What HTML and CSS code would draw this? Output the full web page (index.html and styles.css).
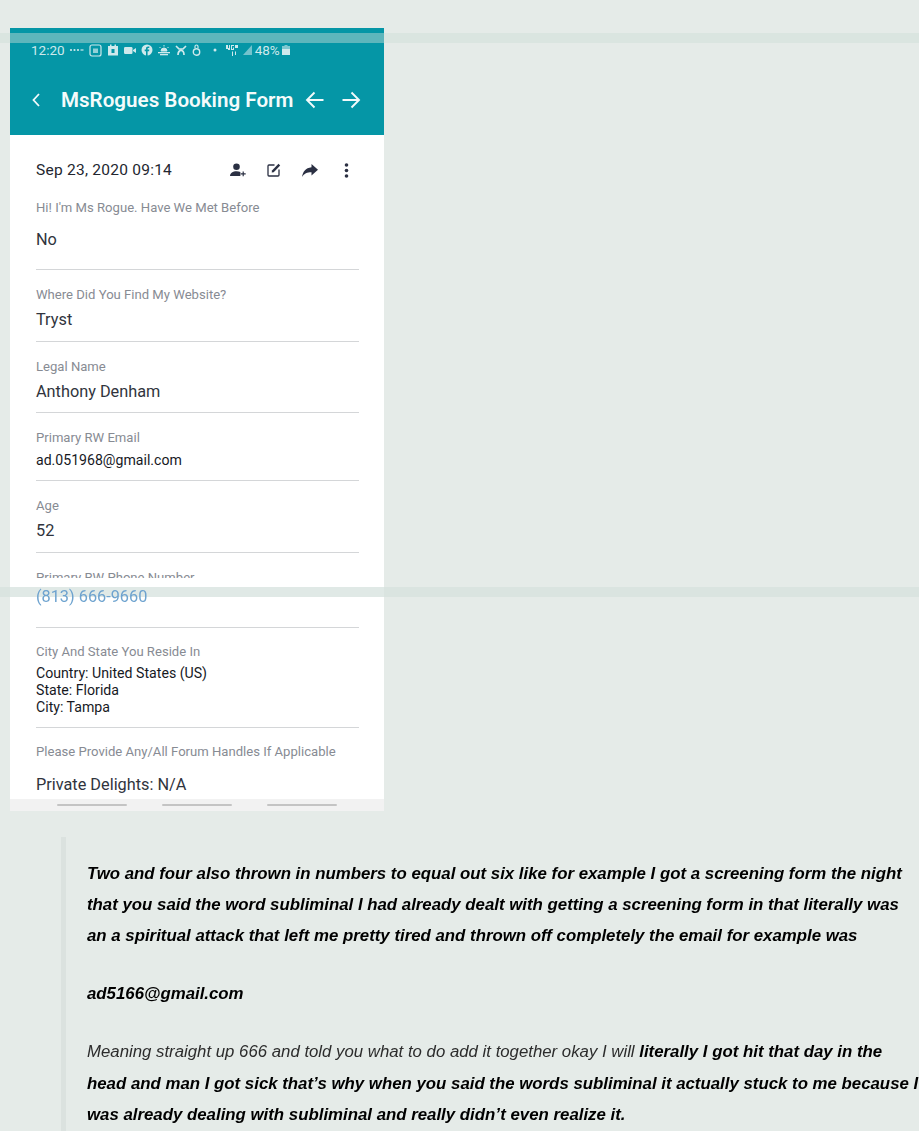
FILE: index.html
```html
<!DOCTYPE html>
<html lang="en">
<head>
    <meta charset="UTF-8">
    <meta name="viewport" content="width=device-width, initial-scale=1.0">
    <title>MsRogues Booking Form</title>
    <link rel="stylesheet" href="styles.css">
</head>
<body>
    <div class="band band-top"></div>

    <div class="phone">
        <div class="band band-mid"></div>
        <div class="app-header">
            <div class="status-bar">
                <span class="clock">12:20</span>
                <svg class="st st-dots" width="15" height="10" viewBox="0 0 15 10"><circle cx="2" cy="5" r="1.100"/><circle cx="5.500" cy="5" r="1.100"/><circle cx="9" cy="5" r="1.100"/><path d="M11.500 4h3v2h-3z" opacity=".6"/></svg>
                <svg class="st" width="13" height="13" viewBox="0 0 13 13"><rect x="1" y="1" width="11" height="11" rx="2" fill="none" stroke="#cfe9ec" stroke-width="1.200"/><rect x="4" y="4.500" width="5" height="4.500" fill="#cfe9ec" opacity=".7"/></svg>
                <svg class="st" width="12" height="12" viewBox="0 0 12 12"><path d="M1 2h2V0.500h1.500V2h3V0.500H9V2h2v9.500H1z"/><rect x="4.500" y="5" width="3" height="4" fill="#0596a6"/></svg>
                <svg class="st" width="12" height="9" viewBox="0 0 12 9"><rect x="0" y="1" width="8.500" height="7" rx="1.200"/><path d="M9 4l3-2v5L9 5z"/></svg>
                <svg class="st" width="12" height="12" viewBox="0 0 12 12"><circle cx="6" cy="6" r="5.500"/><path d="M6.600 12V7.200h1.500l.2-1.600H6.600V4.700c0-.5.2-.8.8-.8h.9V2.500H7.100C5.700 2.500 5 3.300 5 4.500v1.100H3.700v1.600H5V12z" fill="#0596a6"/></svg>
                <svg class="st" width="12" height="11" viewBox="0 0 12 11"><path d="M3 6a3 3 0 0 1 6 0zM6 0v1.500M1.500 2l1 1M10.500 2l-1 1" stroke="#cfe9ec" stroke-width="1"/><rect x="0" y="7" width="12" height="1.300"/><rect x="2" y="9" width="8" height="1.300"/></svg>
                <svg class="st" width="12" height="11" viewBox="0 0 12 11"><path d="M1 1l3 3h4l3-3M3 10c0-3 1.500-4.500 3-4.500S9 7 9 10" fill="none" stroke="#cfe9ec" stroke-width="1.700"/></svg>
                <svg class="st" width="9" height="12" viewBox="0 0 9 12"><circle cx="4.500" cy="8" r="3.200" fill="none" stroke="#cfe9ec" stroke-width="1.400"/><path d="M3 4V2.500a1.500 1.500 0 0 1 3 0V4" fill="none" stroke="#cfe9ec" stroke-width="1.200"/></svg>
                <svg class="st st-dot" width="4" height="4" viewBox="0 0 4 4"><circle cx="2" cy="2" r="1.500"/></svg>
                <svg class="st" width="15" height="11" viewBox="0 0 15 11"><path d="M0 0h2v3h1V0h1v5H2V4H0zM5 0h3v1H6v3h1V2.500h1V5H5zM9 0h3v3H9zM6 6.500h1V11H6zM9 6.500h1V10H9z"/></svg>
                <svg class="st st-signal" width="9" height="10" viewBox="0 0 9 10"><path d="M9 0v10H0z" opacity=".55"/></svg>
                <span class="battery-text">48%</span>
                <svg class="st st-battery" width="8" height="10" viewBox="0 0 8 10"><path d="M2.500 0h3v1H8v9H0V1h2.500z" opacity=".6"/><rect x="0" y="4" width="8" height="6"/></svg>
            </div>
            <div class="title-bar">
                <svg class="back" width="10" height="16" viewBox="0 0 10 16"><path d="M8 2L2.500 8 8 14" fill="none" stroke="#f2fafb" stroke-width="1.800"/></svg>
                <h1 class="title">MsRogues Booking Form</h1>
                <svg class="arrow-icon" width="20" height="18" viewBox="0 0 20 18"><path d="M18.500 9H2M9.500 1.500L2 9l7.500 7.500" fill="none" stroke="#f2fafb" stroke-width="1.900"/></svg>
                <svg class="arrow-icon arrow-next" width="20" height="18" viewBox="0 0 20 18"><path d="M1.500 9H18M10.500 1.500L18 9l-7.500 7.500" fill="none" stroke="#f2fafb" stroke-width="1.900"/></svg>
            </div>
        </div>

        <div class="form">
            <div class="form-top">
                <span class="form-date">Sep 23, 2020 09:14</span>
                <div class="form-actions">
                    <svg width="16" height="14" viewBox="0 0 16 14"><circle cx="6.500" cy="3.800" r="3.300"/><path d="M0 13c0-3 3-4.800 6.500-4.800 1.500 0 2.800.3 3.900.9V13z"/><path d="M12.600 8.500h1.200v1.800h1.900v1.200h-1.900v1.800h-1.200v-1.800h-1.900v-1.200h1.900z"/></svg>
                    <svg width="14" height="14" viewBox="0 0 14 14"><path d="M7.500 2H2a1 1 0 0 0-1 1v9a1 1 0 0 0 1 1h9a1 1 0 0 0 1-1V6.500" fill="none" stroke="#2b3043" stroke-width="1.300"/><path d="M5 7.500L11.500.8l1.700 1.700L6.700 9.200 4.700 9.500z"/></svg>
                    <svg width="16" height="13" viewBox="0 0 16 13"><path d="M9.500 0L16 5.800 9.500 11.500V8.200C5 8.200 2.300 9.500 0 13 .8 8 3.500 4 9.500 3.300z"/></svg>
                    <svg class="action-more" width="5" height="15" viewBox="0 0 5 15"><circle cx="2.500" cy="2" r="1.800"/><circle cx="2.500" cy="7.500" r="1.800"/><circle cx="2.500" cy="13" r="1.800"/></svg>
                </div>
            </div>

            <div class="field field-first">
                <div class="label">Hi! I'm Ms Rogue. Have We Met Before</div>
                <div class="value value-first">No</div>
            </div>
            <div class="field">
                <div class="label">Where Did You Find My Website?</div>
                <div class="value">Tryst</div>
            </div>
            <div class="field">
                <div class="label">Legal Name</div>
                <div class="value">Anthony Denham</div>
            </div>
            <div class="field field-email">
                <div class="label">Primary RW Email</div>
                <div class="value value-small">ad.051968@gmail.com</div>
            </div>
            <div class="field">
                <div class="label">Age</div>
                <div class="value">52</div>
            </div>
            <div class="field field-phone">
                <div class="label label-cut">Primary RW Phone Number</div>
                <div class="value value-link">(813) 666-9660</div>
            </div>
            <div class="field field-city">
                <div class="label">City And State You Reside In</div>
                <div class="value-lines">Country: United States (US)<br>State: Florida<br>City: Tampa</div>
            </div>
            <div class="field field-last">
                <div class="label">Please Provide Any/All Forum Handles If Applicable</div>
                <div class="value value-private">Private Delights: N/A</div>
            </div>
        </div>

        <div class="nav-bar">
            <span class="pill"></span>
            <span class="pill"></span>
            <span class="pill"></span>
        </div>
    </div>

    <blockquote class="quote">
        <p><strong>Two and four also thrown in numbers to equal out six like for example I got a screening form the night<br>
        that you said the word subliminal I had already dealt with getting a screening form in that literally was<br>
        an a spiritual attack that left me pretty tired and thrown off completely the email for example was</strong></p>
        <p><strong>ad5166@gmail.com</strong></p>
        <p>Meaning straight up 666 and told you what to do add it together okay I will <strong>literally I got hit that day in the<br>
        head and man I got sick that’s why when you said the words subliminal it actually stuck to me because I<br>
        was already dealing with subliminal and really didn’t even realize it.</strong></p>
    </blockquote>
</body>
</html>
```
FILE: styles.css
```css
html, body {
    height: 1131px;
    overflow: hidden;
}
body {
    margin: 0;
    padding: 28px 0 0 0;
    box-sizing: border-box;
    background-color: #e5ebe8;
    font-family: Roboto, sans-serif;
    position: relative;
}
.band {
    position: absolute;
    height: 10px;
}
.band-top {
    top: 33px;
    left: 0;
    width: 100%;
    z-index: 5;
    background-color: rgba(205, 222, 216, 0.45);
}
/* sits inside .phone (the filter makes it the containing block), under the phone number */
.band-mid {
    top: 559px;
    left: -10px;
    width: 919px;
    z-index: 1;
    background-color: rgba(214, 226, 221, 0.75);
}
.phone {
    width: 374px;
    margin-left: 10px;
    background-color: #fff;
    filter: blur(0.3px);
}
.app-header {
    height: 107px;
    background-color: #0596a6;
}
.status-bar {
    display: flex;
    align-items: center;
    height: 14px;
    padding: 15px 0 0 21px;
    color: #cfe9ec;
    font-size: 13.500px;
    gap: 5px;
}
.st {
    fill: #cfe9ec;
    flex: none;
}
.st-dots {
    margin-left: -1px;
}
.st-dot {
    margin: 0 4px 0 7px;
}
.st-signal {
    margin-left: -3px;
}
.battery-text {
    margin-left: -2px;
}
.st-battery {
    margin-left: -3px;
}
.title-bar {
    display: flex;
    align-items: center;
    padding: 27px 0 0 21px;
    height: 32px;
}
.back {
    flex: none;
}
.title {
    margin: 0 0 0 20px;
    font-size: 20.600px;
    font-weight: 600;
    color: #f4fbfb;
    white-space: nowrap;
}
.arrow-icon {
    flex: none;
    margin-left: 12px;
}
.arrow-next {
    margin-left: 16px;
}
.form {
    height: 664px;
    padding: 0 25px 0 26px;
    overflow: hidden;
}
.form-top {
    display: flex;
    align-items: center;
    justify-content: space-between;
    height: 20px;
    padding-top: 25px;
}
.form-date {
    font-size: 15.500px;
    letter-spacing: 0.25px;
    color: #23262f;
}
.form-actions {
    display: flex;
    align-items: center;
    gap: 21px;
    margin-right: 10px;
    fill: #2b3043;
}
.form-actions svg {
    display: block;
}
.action-more {
    margin-left: 5px;
}
.field {
    border-bottom: 1px solid #d4d6d8;
    padding: 17px 0 10.500px;
}
.label {
    font-size: 13.100px;
    line-height: 15px;
    color: #878b93;
}
.value {
    font-size: 16.300px;
    line-height: 20px;
    margin-top: 8px;
    color: #30343d;
}
.field-first {
    padding: 19.500px 0 19.700px;
}
.value-first {
    margin-top: 15px;
}
.field-email {
    padding-bottom: 10px;
}
.value-small {
    font-size: 14.100px;
    margin-top: 5px;
    color: #17191f;
}
.field-phone {
    padding-bottom: 20px;
}
.label-cut {
    height: 8px;
    overflow: hidden;
}
.value-link {
    position: relative;
    z-index: 2;
    color: #6ea3cf;
    margin-top: 9px;
}
.field-city {
    padding: 16px 0 11.500px;
}
.value-lines {
    margin-top: 6px;
    font-size: 14.150px;
    line-height: 17px;
    color: #17191f;
}
.field-last {
    padding-top: 16px;
    border-bottom: 0;
}
.value-private {
    margin-top: 15.500px;
}
.nav-bar {
    display: flex;
    height: 12px;
    gap: 35px;
    padding-left: 47px;
    align-items: center;
    background-color: #f2f2f2;
}
.pill {
    width: 70px;
    height: 2.500px;
    border-radius: 2px;
    background-color: #c4c4c4;
}
.quote {
    margin: 26px 0 0 61px;
    padding: 21px 0 0 21px;
    border-left: 5px solid #dbe2df;
    font-family: "Liberation Sans", Arial, sans-serif;
    font-style: italic;
    font-size: 16.800px;
    line-height: 31.200px;
    color: #2c2c2c;
    white-space: nowrap;
    height: 300px;
    filter: blur(0.3px);
}
.quote p {
    margin: 0 0 26.800px;
}
.quote strong {
    font-size: 16.820px;
    font-weight: bold;
    color: #000;
}
```
